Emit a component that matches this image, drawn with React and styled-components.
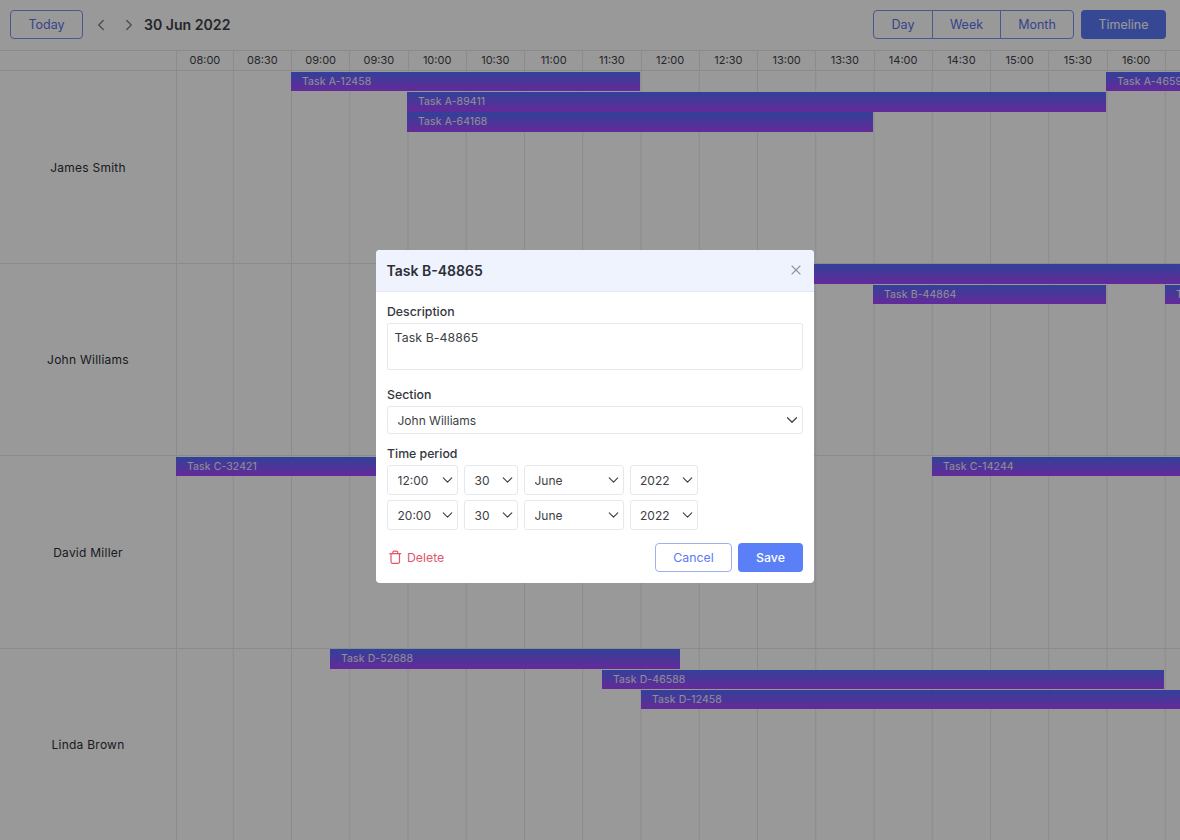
import React from "react";
import styled, { createGlobalStyle } from "styled-components";
import { ChevronLeft, ChevronRight, ChevronDown, X, Trash } from "lucide-react";

const Global = createGlobalStyle`
  html, body { margin: 0; padding: 0; height: 100%; background: #fff; }
  body { font-family: Inter, "Liberation Sans", sans-serif; color: #2c2f36; overflow: hidden; }
  * { box-sizing: border-box; }
`;

const Page = styled.div`
  position: relative;
  width: 1180px;
  height: 840px;
  overflow: hidden;
  display: flex;
  flex-direction: column;
`;

const Toolbar = styled.header`
  height: 50px;
  flex: none;
  display: flex;
  align-items: center;
  padding: 0 14px 1px 10px;
`;

const OutlineButton = styled.button`
  height: 29px;
  padding: 0;
  width: ${p => p.$w}px;
  font: 400 12.5px Inter, sans-serif;
  color: #5b72e8;
  background: #fff;
  border: 1px solid #7e93f0;
  border-radius: 4px;
`;

const NavButton = styled.button`
  width: 28px;
  height: 28px;
  padding: 0;
  border: 0;
  background: none;
  color: #7d8189;
  display: flex;
  align-items: center;
  justify-content: center;
`;

const NavGroup = styled.div`
  display: flex;
  margin-left: 4px;
`;

const DateTitle = styled.h1`
  margin: 0 0 0 1px;
  font-size: 14.1px;
  font-weight: 600;
  color: #3c3f45;
`;

const Spacer = styled.div`
  flex: 1;
`;

const Segmented = styled.div`
  display: flex;
  height: 29px;
  border: 1px solid #7e93f0;
  border-radius: 4px;
`;

const Segment = styled.button`
  width: ${p => p.$w}px;
  padding: 0;
  font: 400 12.5px Inter, sans-serif;
  color: #5b72e8;
  background: none;
  border: 0;
  border-left: ${p => (p.$first ? "0" : "1px solid #7e93f0")};
`;

const PrimaryToolButton = styled.button`
  width: 85px;
  height: 29px;
  margin-left: 7px;
  padding: 0;
  font: 400 12.5px Inter, sans-serif;
  color: #fff;
  background: #5b78f5;
  border: 0;
  border-radius: 4px;
`;

const Scheduler = styled.div`
  flex: 1;
  display: flex;
  flex-direction: column;
  border-top: 1px solid #e8e8e8;
`;

const HeaderRow = styled.div`
  height: 20px;
  flex: none;
  display: grid;
  grid-template-columns: 176px 56.75px repeat(17, 58.25px);
  border-bottom: 1px solid #e8e8e8;
`;

const TimeCell = styled.div`
  border-left: 1px solid #e8e8e8;
  font-size: 11px;
  line-height: 19px;
  text-align: center;
  color: #3f4248;
  white-space: nowrap;
  overflow: hidden;
`;

const Row = styled.section`
  flex: 1;
  display: grid;
  grid-template-columns: 176px 1fr;
  border-bottom: 1px solid #e8e8e8;
  &:last-child { border-bottom: 0; }
`;

const RowName = styled.div`
  display: flex;
  align-items: center;
  justify-content: center;
  padding-top: 1px;
  font-size: 12px;
  font-weight: 400;
  letter-spacing: 0.25px;
  color: #2c2f36;
`;

const Lane = styled.div`
  position: relative;
  overflow: hidden;
  box-shadow: inset 1px 0 0 #e8e8e8;
  background-image: linear-gradient(to right, #e8e8e8 1px, transparent 1px);
  background-size: 58.25px 100%;
  background-position: -1.5px 0;
`;

const Bar = styled.div`
  position: absolute;
  top: ${p => p.$line * 20.4 + 0.6}px;
  left: ${p => p.$left}px;
  width: ${p => p.$width}px;
  height: 19.6px;
  padding-left: 11px;
  font-size: 10.5px;
  line-height: 20px;
  letter-spacing: 0.1px;
  white-space: nowrap;
  overflow: hidden;
  color: #f0eefa;
  background: linear-gradient(180deg, #546cff 0%, #a846ff 100%);
`;

const Backdrop = styled.div`
  position: absolute;
  inset: 0;
  background: rgba(0, 0, 0, 0.4);
`;

const Modal = styled.div`
  position: absolute;
  left: 376px;
  top: 250px;
  width: 438px;
  height: 333px;
  background: #fff;
  border-radius: 4px;
  overflow: hidden;
`;

const ModalHeader = styled.div`
  height: 42px;
  display: flex;
  align-items: center;
  justify-content: space-between;
  padding: 0 10.5px 1px;
  background: #eef3fe;
  border-bottom: 1px solid #e5e8ee;
`;

const ModalTitle = styled.h2`
  margin: 0;
  font-size: 14px;
  font-weight: 600;
  color: #2c2f36;
`;

const CloseButton = styled.button`
  display: flex;
  padding: 0;
  border: 0;
  background: none;
  color: #8f95a0;
`;

const ModalBody = styled.div`
  padding: 12px 11px 0;
`;

const Label = styled.label`
  display: block;
  font-size: 12.3px;
  font-weight: 500;
  line-height: 16px;
  margin-bottom: 3px;
  color: #34373d;
`;

const TextArea = styled.textarea`
  display: block;
  width: 100%;
  height: 47px;
  margin-bottom: 17px;
  padding: 5px 6.5px;
  resize: none;
  font: 400 12.3px/17px Inter, sans-serif;
  letter-spacing: 0.1px;
  color: #3c3f45;
  border: 1px solid #e6e8ec;
  border-radius: 2px;
  outline: 0;
`;

const SelectWrap = styled.div`
  position: relative;
  width: ${p => (p.$w ? `${p.$w}px` : "100%")};
  height: ${p => p.$h}px;
  flex: none;
`;

const NativeSelect = styled.select`
  appearance: none;
  display: block;
  width: 100%;
  height: 100%;
  padding: 0 0 0 9.5px;
  font: 400 12px Inter, sans-serif;
  color: #3c3f45;
  background: #fff;
  border: 1px solid #e6e8ec;
  border-radius: 3px;
  outline: 0;
`;

const Caret = styled(ChevronDown)`
  position: absolute;
  right: 2px;
  top: 50%;
  transform: translateY(-50%);
  color: #3c3f45;
  pointer-events: none;
`;

const SectionField = styled.div`
  margin-bottom: 12px;
`;

const TimeRow = styled.div`
  display: flex;
  gap: 6px;
  margin-bottom: 5px;
`;

const Footer = styled.div`
  display: flex;
  align-items: center;
  margin-top: 13px;
`;

const DeleteButton = styled.button`
  display: flex;
  align-items: center;
  gap: 4.5px;
  padding: 0;
  margin-left: 1px;
  border: 0;
  background: none;
  font: 400 12.3px Inter, sans-serif;
  color: #e0566b;
`;

const CancelButton = styled.button`
  width: 77px;
  height: 29px;
  margin-left: auto;
  padding: 0;
  font: 400 12.3px Inter, sans-serif;
  color: #5b78f5;
  background: #fff;
  border: 1px solid #9db0f5;
  border-radius: 4px;
`;

const SaveButton = styled.button`
  width: 65px;
  height: 29px;
  margin-left: 6px;
  padding: 0;
  font: 500 12.3px Inter, sans-serif;
  color: #fff;
  background: #5b7ff7;
  border: 0;
  border-radius: 4px;
`;

const times = ["08:00","08:30","09:00","09:30","10:00","10:30","11:00","11:30","12:00","12:30","13:00","13:30","14:00","14:30","15:00","15:30","16:00",""];

const rows = [
  { name: "James Smith", bars: [
    { t: "Task A-12458", l: 115, w: 349, line: 0 },
    { t: "Task A-46598", l: 930, w: 120, line: 0 },
    { t: "Task A-89411", l: 231, w: 699, line: 1 },
    { t: "Task A-64168", l: 231, w: 466, line: 2 },
  ]},
  { name: "John Williams", bars: [
    { t: "Task B-48865", l: 464, w: 560, line: 0 },
    { t: "Task B-44864", l: 697, w: 233, line: 1 },
    { t: "Task B-77120", l: 989, w: 60, line: 1 },
  ]},
  { name: "David Miller", bars: [
    { t: "Task C-32421", l: 0, w: 290, line: 0 },
    { t: "Task C-14244", l: 756, w: 260, line: 0 },
  ]},
  { name: "Linda Brown", bars: [
    { t: "Task D-52688", l: 154, w: 350, line: 0 },
    { t: "Task D-46588", l: 426, w: 562, line: 1 },
    { t: "Task D-12458", l: 465, w: 560, line: 2 },
  ]},
];

const Select = ({ w, h, value }) => (
  <SelectWrap $w={w} $h={h}>
    <NativeSelect defaultValue={value}>
      <option>{value}</option>
    </NativeSelect>
    <Caret size={w ? 17 : 18} strokeWidth={1.6} />
  </SelectWrap>
);

const TimeSelects = ({ time }) => (
  <TimeRow>
    <Select w={71} h={30} value={time} />
    <Select w={54} h={30} value="30" />
    <Select w={99.5} h={30} value="June" />
    <Select w={68.5} h={30} value="2022" />
  </TimeRow>
);

export default function App() {
  return (
    <Page>
      <Global />
      <Toolbar>
        <OutlineButton $w={73}>Today</OutlineButton>
        <NavGroup>
          <NavButton><ChevronLeft size={18} strokeWidth={1.8} /></NavButton>
          <NavButton><ChevronRight size={18} strokeWidth={1.8} /></NavButton>
        </NavGroup>
        <DateTitle>30 Jun 2022</DateTitle>
        <Spacer />
        <Segmented>
          <Segment $first $w={58}>Day</Segment>
          <Segment $w={68}>Week</Segment>
          <Segment $w={73}>Month</Segment>
        </Segmented>
        <PrimaryToolButton>Timeline</PrimaryToolButton>
      </Toolbar>
      <Scheduler>
        <HeaderRow>
          <div />
          {times.map((t, i) => <TimeCell key={i}>{t}</TimeCell>)}
        </HeaderRow>
        {rows.map(r => (
          <Row key={r.name}>
            <RowName>{r.name}</RowName>
            <Lane>
              {r.bars.map(b => (
                <Bar key={b.t} $left={b.l} $width={b.w} $line={b.line}>{b.t}</Bar>
              ))}
            </Lane>
          </Row>
        ))}
      </Scheduler>
      <Backdrop />
      <Modal>
        <ModalHeader>
          <ModalTitle>Task B-48865</ModalTitle>
          <CloseButton><X size={16} strokeWidth={1.6} /></CloseButton>
        </ModalHeader>
        <ModalBody>
          <Label>Description</Label>
          <TextArea defaultValue="Task B-48865" />
          <SectionField>
            <Label>Section</Label>
            <Select h={28} value="John Williams" />
          </SectionField>
          <Label>Time period</Label>
          <TimeSelects time="12:00" />
          <TimeSelects time="20:00" />
          <Footer>
            <DeleteButton><Trash size={14.5} strokeWidth={2} />Delete</DeleteButton>
            <CancelButton>Cancel</CancelButton>
            <SaveButton>Save</SaveButton>
          </Footer>
        </ModalBody>
      </Modal>
    </Page>
  );
}
